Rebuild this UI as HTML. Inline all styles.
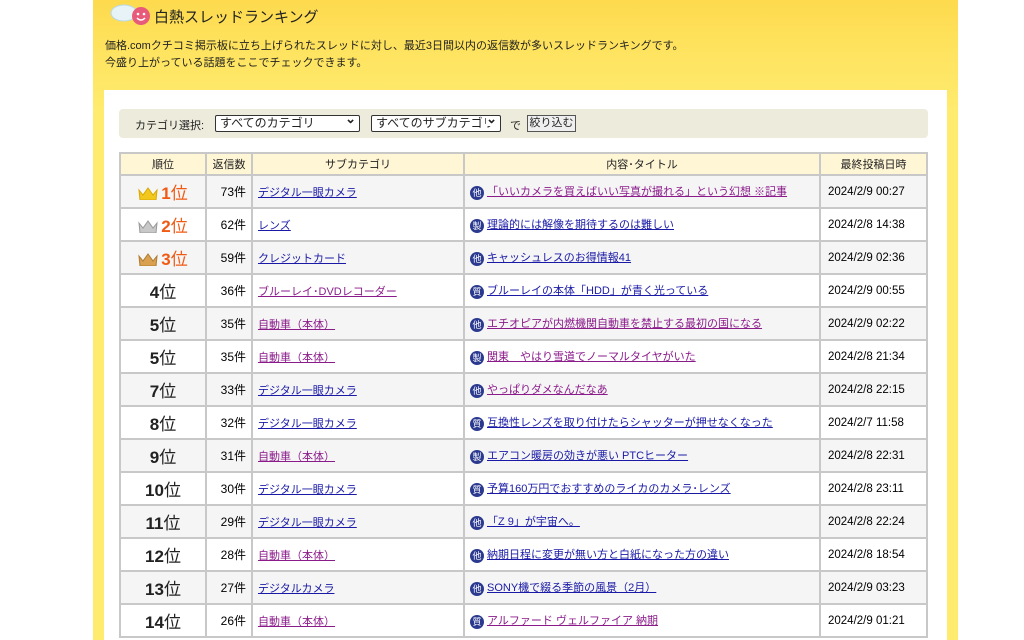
<!DOCTYPE html>
<html><head><meta charset="utf-8">
<style>
html,body{margin:0;background:#fff;font-family:"Liberation Sans","Noto Sans CJK JP",sans-serif;width:1024px;height:640px;overflow:hidden;position:relative}
.panel{position:absolute;left:93px;top:-10px;width:865px;height:650px;background:linear-gradient(#fdd84a 0,#fee35f 60px,#ffeb6e 120px);border-radius:10px 10px 0 0}
.title{position:absolute;left:154px;top:6px;font-size:15px;color:#222}
.desc{position:absolute;left:105px;top:38px;font-size:11px;line-height:17px;color:#222}
.inner{position:absolute;left:104px;top:90px;width:843px;height:550px;background:#fff}
.filter{position:absolute;left:119px;top:109px;width:809px;height:29px;background:#ecebdc;border-radius:4px;font-size:11px;color:#222}
.sel{position:absolute;top:6px;border:1px solid #333;border-radius:2px;background:#fff;font-size:12px;line-height:15px;padding-left:4px;box-sizing:border-box;height:17px;white-space:nowrap;overflow:hidden}
.sel:after{content:"⌄";position:absolute;right:3px;top:-5px;font-size:13px;font-weight:bold;background:#fff}
table{position:absolute;left:119px;top:152px;border-collapse:collapse;font-size:11px;width:809px;table-layout:fixed}
td,th{border:2px solid #c8c8c8;padding:0 5px;height:31px;white-space:nowrap;overflow:hidden}
th{background:#fff6d5;font-weight:normal;height:20px;color:#222}
tr:nth-child(even) td{background:#f5f5f5}
td.r{text-align:center;font-size:17px;font-weight:bold;color:#222}
td.r .u{font-weight:normal}
.top{color:#f05a14}
td.n{text-align:right;font-size:12px}
td.d{font-size:11.5px;padding-left:7px}
a{color:#1a1aa6;text-decoration:underline}
a.v{color:#8b1b8b}
.ic{display:inline-block;width:14px;height:14px;border-radius:50%;background:#2b3a8f;color:#fff;font-size:9px;line-height:14px;text-align:center;vertical-align:middle;margin-right:3px;text-decoration:none}
.cr{display:inline-block;width:20px;height:13px;vertical-align:-1px;margin-right:3px}
</style></head><body>
<div class="panel"></div>
<svg style="position:absolute;left:108px;top:2px" width="44" height="26"><ellipse cx="16" cy="11" rx="13" ry="8" fill="#e8f3f8" stroke="#b8d8e8"/><circle cx="33" cy="14" r="9" fill="#e85a7a"/><circle cx="30" cy="12" r="1.3" fill="#fff"/><circle cx="36" cy="12" r="1.3" fill="#fff"/><path d="M29 16 Q33 20 37 16" stroke="#fff" fill="none" stroke-width="1.5"/></svg>
<div class="title">白熱スレッドランキング</div>
<div class="desc">価格.comクチコミ掲示板に立ち上げられたスレッドに対し、最近3日間以内の返信数が多いスレッドランキングです。<br>今盛り上がっている話題をここでチェックできます。</div>
<div class="inner"></div>
<div class="filter">
<span style="position:absolute;left:16px;top:8px">カテゴリ選択:</span>
<div class="sel" style="left:96px;width:145px">すべてのカテゴリ</div>
<div class="sel" style="left:252px;width:130px">すべてのサブカテゴリ</div>
<span style="position:absolute;left:391px;top:8px">で</span>
<div style="position:absolute;left:408px;top:6px;height:17px;width:49px;border:1px solid #555;box-sizing:border-box;background:#efefef;font-size:11px;line-height:15px;text-align:center;white-space:nowrap;overflow:hidden">絞り込む</div>
</div>
<table>
<colgroup><col style="width:86px"><col style="width:46px"><col style="width:212px"><col style="width:356px"><col></colgroup>
<tr><th>順位</th><th>返信数</th><th>サブカテゴリ</th><th>内容･タイトル</th><th>最終投稿日時</th></tr>
<tr><td class="r"><svg class="cr" viewBox="0 0 20 13"><path d="M1 3 L5 8 L10 1 L15 8 L19 3 L18 13 L2 13Z" fill="#f2c81e" stroke="#d9a800"/></svg><span class="top">1</span><span class="u top">位</span></td><td class="n">73件</td><td><a>デジタル一眼カメラ</a></td><td><span class="ic">他</span><a class="v">「いいカメラを買えばいい写真が撮れる」という幻想 ※記事</a></td><td class="d">2024/2/9 00:27</td></tr>
<tr><td class="r"><svg class="cr" viewBox="0 0 20 13"><path d="M1 3 L5 8 L10 1 L15 8 L19 3 L18 13 L2 13Z" fill="#c8c8c8" stroke="#999"/></svg><span class="top">2</span><span class="u top">位</span></td><td class="n">62件</td><td><a>レンズ</a></td><td><span class="ic">製</span><a>理論的には解像を期待するのは難しい</a></td><td class="d">2024/2/8 14:38</td></tr>
<tr><td class="r"><svg class="cr" viewBox="0 0 20 13"><path d="M1 3 L5 8 L10 1 L15 8 L19 3 L18 13 L2 13Z" fill="#d9a050" stroke="#b07a30"/></svg><span class="top">3</span><span class="u top">位</span></td><td class="n">59件</td><td><a>クレジットカード</a></td><td><span class="ic">他</span><a>キャッシュレスのお得情報41</a></td><td class="d">2024/2/9 02:36</td></tr>
<tr><td class="r">4<span class="u">位</span></td><td class="n">36件</td><td><a class="v">ブルーレイ･DVDレコーダー</a></td><td><span class="ic">質</span><a>ブルーレイの本体「HDD」が青く光っている</a></td><td class="d">2024/2/9 00:55</td></tr>
<tr><td class="r">5<span class="u">位</span></td><td class="n">35件</td><td><a class="v">自動車（本体）</a></td><td><span class="ic">他</span><a class="v">エチオピアが内燃機関自動車を禁止する最初の国になる</a></td><td class="d">2024/2/9 02:22</td></tr>
<tr><td class="r">5<span class="u">位</span></td><td class="n">35件</td><td><a class="v">自動車（本体）</a></td><td><span class="ic">製</span><a class="v">関東　やはり雪道でノーマルタイヤがいた</a></td><td class="d">2024/2/8 21:34</td></tr>
<tr><td class="r">7<span class="u">位</span></td><td class="n">33件</td><td><a>デジタル一眼カメラ</a></td><td><span class="ic">他</span><a class="v">やっぱりダメなんだなあ</a></td><td class="d">2024/2/8 22:15</td></tr>
<tr><td class="r">8<span class="u">位</span></td><td class="n">32件</td><td><a>デジタル一眼カメラ</a></td><td><span class="ic">質</span><a>互換性レンズを取り付けたらシャッターが押せなくなった</a></td><td class="d">2024/2/7 11:58</td></tr>
<tr><td class="r">9<span class="u">位</span></td><td class="n">31件</td><td><a class="v">自動車（本体）</a></td><td><span class="ic">製</span><a>エアコン暖房の効きが悪い PTCヒーター</a></td><td class="d">2024/2/8 22:31</td></tr>
<tr><td class="r">10<span class="u">位</span></td><td class="n">30件</td><td><a>デジタル一眼カメラ</a></td><td><span class="ic">質</span><a>予算160万円でおすすめのライカのカメラ･レンズ</a></td><td class="d">2024/2/8 23:11</td></tr>
<tr><td class="r">11<span class="u">位</span></td><td class="n">29件</td><td><a>デジタル一眼カメラ</a></td><td><span class="ic">他</span><a>「Z 9」が宇宙へ。</a></td><td class="d">2024/2/8 22:24</td></tr>
<tr><td class="r">12<span class="u">位</span></td><td class="n">28件</td><td><a class="v">自動車（本体）</a></td><td><span class="ic">他</span><a>納期日程に変更が無い方と白紙になった方の違い</a></td><td class="d">2024/2/8 18:54</td></tr>
<tr><td class="r">13<span class="u">位</span></td><td class="n">27件</td><td><a>デジタルカメラ</a></td><td><span class="ic">他</span><a>SONY機で綴る季節の風景（2月）</a></td><td class="d">2024/2/9 03:23</td></tr>
<tr><td class="r">14<span class="u">位</span></td><td class="n">26件</td><td><a class="v">自動車（本体）</a></td><td><span class="ic">質</span><a class="v">アルファード ヴェルファイア 納期</a></td><td class="d">2024/2/9 01:21</td></tr>
</table>
</body></html>
